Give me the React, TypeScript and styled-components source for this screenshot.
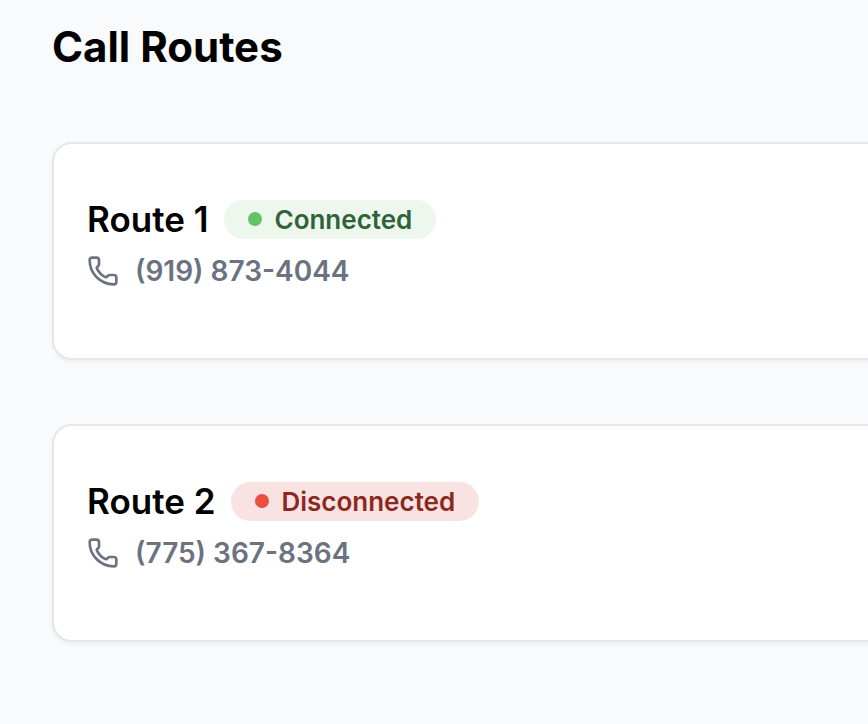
import React from "react";
import { Phone } from "lucide-react";
import styled, { createGlobalStyle } from "styled-components";

const GlobalStyle = createGlobalStyle`
  *, *::before, *::after { box-sizing: border-box; }
  body {
    margin: 0;
    background: #f9fafc;
    color: #000;
    font-family: Inter, "Liberation Sans", sans-serif;
    overflow-x: hidden;
    -webkit-font-smoothing: antialiased;
  }
`;

const Page = styled.main`
  min-height: 100vh;
  padding: 23px 0 82px 52px;
`;

const Title = styled.h1`
  margin: 0 0 71px;
  font-size: 42px;
  line-height: 48px;
  font-weight: 700;
`;

const RouteList = styled.div`
  display: flex;
  flex-direction: column;
  gap: 64px;
`;

const RouteCard = styled.section`
  margin-right: -24px;
  padding: 51px 33px 65px;
  border: 2px solid #e5e7eb;
  border-radius: 20px;
  background: #fff;
  box-shadow: 0 2px 4px rgba(0, 0, 0, 0.05);
`;

const RouteHeader = styled.div`
  display: flex;
  align-items: center;
  gap: 16px;
`;

const RouteName = styled.h2`
  margin: 0;
  font-size: 35px;
  line-height: 48px;
  font-weight: 600;
`;

type Status = "Connected" | "Disconnected";

const palette = {
  Connected: { background: "#edf7ed", text: "#2e6338", dot: "#62c466" },
  Disconnected: { background: "#f9e3e2", text: "#8c2822", dot: "#eb4f3f" },
};

const StatusBadge = styled.span<{ $status: Status }>`
  display: inline-flex;
  align-items: center;
  gap: 12px;
  padding: 0 24px;
  border-radius: 20px;
  background: ${({ $status }) => palette[$status].background};
  color: ${({ $status }) => palette[$status].text};
  font-size: 26px;
  line-height: 39px;
  font-weight: 600;

  &::before {
    content: "";
    width: 14px;
    height: 14px;
    border-radius: 50%;
    background: ${({ $status }) => palette[$status].dot};
  }
`;

const PhoneRow = styled.div`
  display: flex;
  align-items: center;
  gap: 16px;
  margin-top: 6px;
  color: #6b7280;
  font-size: 28px;
  line-height: 44px;
  font-weight: 600;
`;

const PhoneIcon = styled(Phone)`
  width: 32px;
  height: 32px;
`;

const routes: { name: string; status: Status; phone: string }[] = [
  { name: "Route 1", status: "Connected", phone: "(919) 873-4044" },
  { name: "Route 2", status: "Disconnected", phone: "(775) 367-8364" },
];

export default function App() {
  return (
    <>
      <GlobalStyle />
      <Page>
        <Title>Call Routes</Title>
        <RouteList>
          {routes.map((route) => (
            <RouteCard key={route.name}>
              <RouteHeader>
                <RouteName>{route.name}</RouteName>
                <StatusBadge $status={route.status}>{route.status}</StatusBadge>
              </RouteHeader>
              <PhoneRow>
                <PhoneIcon strokeWidth={2} aria-hidden="true" />
                <span>{route.phone}</span>
              </PhoneRow>
            </RouteCard>
          ))}
        </RouteList>
      </Page>
    </>
  );
}
